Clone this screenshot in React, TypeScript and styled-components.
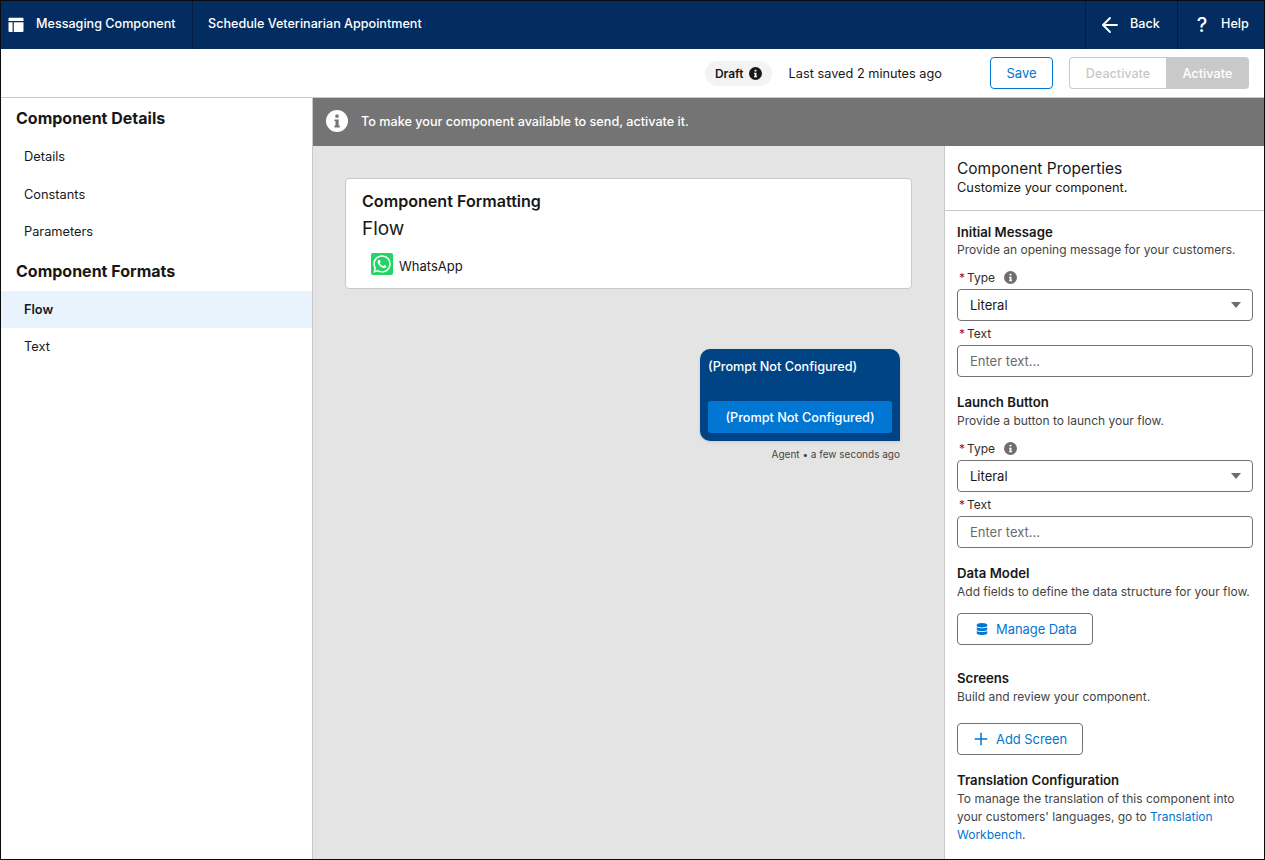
import React, { FC } from 'react'
import styled, { createGlobalStyle } from 'styled-components'
import { FaWhatsapp, FaDatabase } from 'react-icons/fa'
import { ArrowLeft, Plus } from 'lucide-react'

const GlobalStyle = createGlobalStyle`
  html, body {
    margin: 0;
    padding: 0;
    height: 100%;
    overflow: hidden;
  }
  body {
    font-family: Inter, "Liberation Sans", sans-serif;
    font-size: 13px;
    color: #181818;
  }
  * {
    box-sizing: border-box;
  }
`

const Frame = styled.div`
  width: 1265px;
  height: 860px;
  border: 1px solid #0b0b0b;
  display: flex;
  flex-direction: column;
  overflow: hidden;
  background: #fff;
`

const Header = styled.header`
  height: 48px;
  flex: none;
  display: flex;
  align-items: stretch;
  background: #032d60;
  color: #fff;
`

const HeaderCell = styled.div<{ $divider?: 'left' | 'right'; $width?: number }>`
  display: flex;
  align-items: center;
  gap: 12px;
  font-size: 12.6px;
  font-weight: 500;
  width: ${(p) => (p.$width ? `${p.$width}px` : 'auto')};
  padding: 0 7px 3px;
  border-right: ${(p) => (p.$divider === 'right' ? '1px solid #011d40' : 'none')};
  border-left: ${(p) => (p.$divider === 'left' ? '1px solid #011d40' : 'none')};
`

const TitleCell = styled(HeaderCell)`
  padding: 0 15px 3px;
  flex: 1;
`

const BackCell = styled(HeaderCell)`
  padding: 0 0 3px 12px;
  gap: 8px;
`

const HelpCell = styled(HeaderCell)`
  padding: 0 0 3px 17px;
  gap: 12px;
`

const AppIcon = styled.svg`
  margin-top: 3px;
  flex: none;
`

const BackArrow = styled(ArrowLeft)`
  margin-top: 3px;
  flex: none;
`

const HelpGlyph = styled.span`
  width: 14px;
  margin-top: 3px;
  text-align: center;
  font-size: 20px;
  font-weight: 500;
  line-height: 1;
`

const Toolbar = styled.div`
  height: 49px;
  flex: none;
  display: flex;
  align-items: center;
  justify-content: flex-end;
  padding: 0 15px 0 0;
  border-bottom: 1px solid #c9c9c9;
`

const DraftPill = styled.div`
  display: flex;
  align-items: center;
  gap: 5px;
  height: 25px;
  padding: 0 10px;
  border-radius: 13px;
  background: #f3f3f3;
  font-size: 12px;
  font-weight: 600;
`

const SavedText = styled.span`
  margin: 0 48px 0 17px;
  font-size: 12.75px;
`

const SaveButton = styled.button`
  width: 63px;
  height: 32px;
  padding: 0;
  border: 1px solid #0176d3;
  border-radius: 4px;
  background: #fff;
  color: #0176d3;
  font: 400 13px Inter, sans-serif;
`

const ButtonGroup = styled.div`
  display: flex;
  margin-left: 16px;
  height: 32px;
`

const DeactivateButton = styled.button`
  width: 97px;
  padding: 0;
  border: 1px solid #c9c9c9;
  border-right: none;
  border-radius: 4px 0 0 4px;
  background: #fff;
  color: #c9c9c9;
  font: 500 12.6px Inter, sans-serif;
`

const ActivateButton = styled.button`
  width: 83px;
  padding: 0;
  border: none;
  border-radius: 0 4px 4px 0;
  background: #c9c9c9;
  color: #fff;
  font: 500 12.8px Inter, sans-serif;
`

const Body = styled.div`
  flex: 1;
  min-height: 0;
  display: flex;
`

const Sidebar = styled.nav`
  width: 312px;
  flex: none;
  border-right: 1px solid #c9c9c9;
  padding-top: 10px;
`

const SidebarHeading = styled.h2<{ $gap?: number }>`
  margin: ${(p) => p.$gap ?? 0}px 0 0;
  padding: 0 15px;
  height: 21px;
  line-height: 21px;
  font-size: 16px;
  font-weight: 700;
`

const SidebarItem = styled.div<{ $active?: boolean; $top?: number }>`
  height: 37.5px;
  margin-top: ${(p) => p.$top ?? 0}px;
  padding: 0 23px;
  display: flex;
  align-items: center;
  font-size: 12.8px;
  font-weight: ${(p) => (p.$active ? 600 : 400)};
  background: ${(p) => (p.$active ? '#e8f3fd' : 'transparent')};
`

const Main = styled.main`
  flex: 1;
  min-width: 0;
  display: flex;
  flex-direction: column;
`

const Banner = styled.div`
  height: 48px;
  flex: none;
  display: flex;
  align-items: center;
  gap: 13px;
  padding: 0 13px 2px;
  background: #747474;
  color: #fff;
  font-size: 12.65px;
  font-weight: 500;
`

const Workspace = styled.div`
  flex: 1;
  min-height: 0;
  display: flex;
`

const Canvas = styled.div`
  flex: 1;
  min-width: 0;
  background: #e4e4e4;
  padding: 32px 32px 0 32px;
  display: flex;
  flex-direction: column;
`

const FormatCard = styled.section`
  height: 111px;
  background: #fff;
  border: 1px solid #c9c9c9;
  border-radius: 4px;
  padding: 13px 16px;
`

const CardTitle = styled.div`
  font-size: 16.1px;
  font-weight: 600;
  line-height: 19px;
`

const CardSubtitle = styled.div`
  margin-top: 6px;
  font-size: 19px;
  line-height: 24px;
`

const ChannelRow = styled.div`
  display: flex;
  align-items: center;
  gap: 6px;
  margin: 12px 0 0 9px;
  font-size: 13px;
`

const ChannelName = styled.span`
  margin-top: 3px;
`

const WhatsAppBadge = styled.span`
  width: 22px;
  height: 22px;
  display: flex;
  align-items: center;
  justify-content: center;
  border-radius: 2px;
  background: #25d366;
  color: #fff;
`

const MessageBlock = styled.div`
  align-self: flex-end;
  margin: 60px 12px 0 0;
  width: 200px;
`

const Bubble = styled.div`
  height: 92px;
  padding: 10px 8px 8px;
  background: #014486;
  color: #fff;
  border-radius: 10px 10px 0 10px;
  box-shadow: 0 1px 3px rgba(0, 0, 0, 0.12);
  display: flex;
  flex-direction: column;
  justify-content: space-between;
  font-size: 12.65px;
  font-weight: 500;
`

const BubbleButton = styled.div`
  height: 32px;
  display: flex;
  align-items: center;
  justify-content: center;
  border-radius: 3px;
  background: #0176d3;
`

const Meta = styled.div`
  margin-top: 7px;
  text-align: right;
  font-size: 10px;
  line-height: 13px;
  color: #444;
`

const Panel = styled.aside`
  width: 320px;
  flex: none;
  background: #fff;
  border-left: 1px solid #c9c9c9;
`

const PanelHead = styled.div`
  height: 65px;
  padding: 13px 12px 0;
  border-bottom: 1px solid #c9c9c9;
`

const PanelTitle = styled.div`
  font-size: 15.5px;
  line-height: 19px;
`

const PanelSub = styled.div`
  font-size: 12.8px;
  line-height: 18px;
  margin-top: 1px;
`

const PanelBody = styled.div`
  padding: 12px 11px 0 12px;
`

const SectionTitle = styled.div<{ $gap?: number }>`
  margin-top: ${(p) => p.$gap ?? 0}px;
  font-size: 13.2px;
  font-weight: 600;
  line-height: 18px;
`

const Help = styled.div<{ $top?: number }>`
  margin-top: ${(p) => p.$top ?? 0}px;
  font-size: 12px;
  line-height: 18px;
  color: #444;
`

const FieldLabel = styled.div<{ $gap: number }>`
  margin-top: ${(p) => p.$gap}px;
  height: 18px;
  display: flex;
  align-items: center;
  font-size: 12px;
  color: #2e2e2e;
`

const Required = styled.span`
  color: #ba0517;
  margin: 0 2px 0 2px;
`

const InfoDot = styled.span`
  margin-left: 9px;
  display: flex;
`

const SelectBox = styled.div`
  margin-top: 3px;
  height: 32px;
  display: flex;
  align-items: center;
  justify-content: space-between;
  padding: 0 12px;
  border: 1px solid #747474;
  border-radius: 4px;
  font-size: 13px;
`

const Caret = styled.span`
  width: 0;
  height: 0;
  border-left: 5.5px solid transparent;
  border-right: 5.5px solid transparent;
  border-top: 6px solid #706e6b;
  margin-right: -1px;
`

const TextBox = styled.div`
  margin-top: 3px;
  height: 32px;
  display: flex;
  align-items: center;
  padding: 0 12px;
  border: 1px solid #747474;
  border-radius: 4px;
  font-size: 13px;
  color: #6b6b6b;
`

const OutlineButton = styled.button<{ $width: number; $gap: number; $inset: number; $iconGap: number }>`
  display: flex;
  align-items: center;
  gap: ${(p) => p.$iconGap}px;
  width: ${(p) => p.$width}px;
  height: 32px;
  margin-top: ${(p) => p.$gap}px;
  padding: 0 0 0 ${(p) => p.$inset}px;
  border: 1px solid #747474;
  border-radius: 4px;
  background: #fff;
  color: #0176d3;
  font: 400 12.9px Inter, sans-serif;
`

const Link = styled.span`
  color: #0176d3;
`

const InfoIcon: FC<{ size: number; bg: string; fg: string }> = ({ size, bg, fg }) => (
  <svg width={size} height={size} viewBox="0 0 24 24">
    <circle cx="12" cy="12" r="12" fill={bg} />
    <rect x="10.2" y="5" width="3.6" height="3.4" rx="1" fill={fg} />
    <path d="M9.2 10.4h4.6v6.6h1.2v2H9.2v-2h1.2v-4.6H9.2z" fill={fg} />
  </svg>
)

const App: FC = () => (
  <>
    <GlobalStyle />
    <Frame>
      <Header>
        <HeaderCell $divider="right" $width={192}>
          <AppIcon width="16" height="16" viewBox="0 0 16 16" fill="#fff">
            <path d="M.5 1.6C.5 1.1.9.8 1.4.8h13.2c.5 0 .9.3.9.8V4H.5z" />
            <path d="M.5 5.2h4.1v9.8H1.4c-.5 0-.9-.4-.9-.9z" />
            <path d="M5.8 5.2h9.7v8.9c0 .5-.4.9-.9.9H5.8z" />
          </AppIcon>
          Messaging Component
        </HeaderCell>
        <TitleCell>Schedule Veterinarian Appointment</TitleCell>
        <BackCell $divider="left" $width={92}>
          <BackArrow size={24} strokeWidth={1.9} />
          Back
        </BackCell>
        <HelpCell $divider="left" $width={87}>
          <HelpGlyph>?</HelpGlyph>
          Help
        </HelpCell>
      </Header>
      <Toolbar>
        <DraftPill>
          Draft
          <InfoIcon size={13} bg="#181818" fg="#fff" />
        </DraftPill>
        <SavedText>Last saved 2 minutes ago</SavedText>
        <SaveButton>Save</SaveButton>
        <ButtonGroup>
          <DeactivateButton>Deactivate</DeactivateButton>
          <ActivateButton>Activate</ActivateButton>
        </ButtonGroup>
      </Toolbar>
      <Body>
        <Sidebar>
          <SidebarHeading>Component Details</SidebarHeading>
          <SidebarItem $top={9}>Details</SidebarItem>
          <SidebarItem>Constants</SidebarItem>
          <SidebarItem>Parameters</SidebarItem>
          <SidebarHeading $gap={10}>Component Formats</SidebarHeading>
          <SidebarItem $top={9} $active>Flow</SidebarItem>
          <SidebarItem>Text</SidebarItem>
        </Sidebar>
        <Main>
          <Banner>
            <InfoIcon size={22} bg="#fff" fg="#747474" />
            To make your component available to send, activate it.
          </Banner>
          <Workspace>
            <Canvas>
              <FormatCard>
                <CardTitle>Component Formatting</CardTitle>
                <CardSubtitle>Flow</CardSubtitle>
                <ChannelRow>
                  <WhatsAppBadge>
                    <FaWhatsapp size={20} />
                  </WhatsAppBadge>
                  <ChannelName>WhatsApp</ChannelName>
                </ChannelRow>
              </FormatCard>
              <MessageBlock>
                <Bubble>
                  (Prompt Not Configured)
                  <BubbleButton>(Prompt Not Configured)</BubbleButton>
                </Bubble>
                <Meta>Agent • a few seconds ago</Meta>
              </MessageBlock>
            </Canvas>
            <Panel>
              <PanelHead>
                <PanelTitle>Component Properties</PanelTitle>
                <PanelSub>Customize your component.</PanelSub>
              </PanelHead>
              <PanelBody>
                <SectionTitle>Initial Message</SectionTitle>
                <Help>Provide an opening message for your customers.</Help>
                <FieldLabel $gap={9}>
                  <Required>*</Required>Type
                  <InfoDot>
                    <InfoIcon size={13} bg="#706e6b" fg="#fff" />
                  </InfoDot>
                </FieldLabel>
                <SelectBox>
                  Literal
                  <Caret />
                </SelectBox>
                <FieldLabel $gap={3}>
                  <Required>*</Required>Text
                </FieldLabel>
                <TextBox>Enter text...</TextBox>
                <SectionTitle $gap={16}>Launch Button</SectionTitle>
                <Help $top={1}>Provide a button to launch your flow.</Help>
                <FieldLabel $gap={9}>
                  <Required>*</Required>Type
                  <InfoDot>
                    <InfoIcon size={13} bg="#706e6b" fg="#fff" />
                  </InfoDot>
                </FieldLabel>
                <SelectBox>
                  Literal
                  <Caret />
                </SelectBox>
                <FieldLabel $gap={3}>
                  <Required>*</Required>Text
                </FieldLabel>
                <TextBox>Enter text...</TextBox>
                <SectionTitle $gap={16}>Data Model</SectionTitle>
                <Help $top={1}>Add fields to define the data structure for your flow.</Help>
                <OutlineButton $width={136} $gap={12} $inset={18} $iconGap={8}>
                  <FaDatabase size={12} />
                  Manage Data
                </OutlineButton>
                <SectionTitle $gap={24}>Screens</SectionTitle>
                <Help $top={1}>Build and review your component.</Help>
                <OutlineButton $width={126} $gap={17} $inset={13} $iconGap={5}>
                  <Plus size={20} strokeWidth={1.8} />
                  Add Screen
                </OutlineButton>
                <SectionTitle $gap={16}>Translation Configuration</SectionTitle>
                <Help $top={1}>To manage the translation of this component into</Help>
                <Help>
                  your customers' languages, go to <Link>Translation</Link>
                </Help>
                <Help>
                  <Link>Workbench</Link>.
                </Help>
              </PanelBody>
            </Panel>
          </Workspace>
        </Main>
      </Body>
    </Frame>
  </>
)

export default App
